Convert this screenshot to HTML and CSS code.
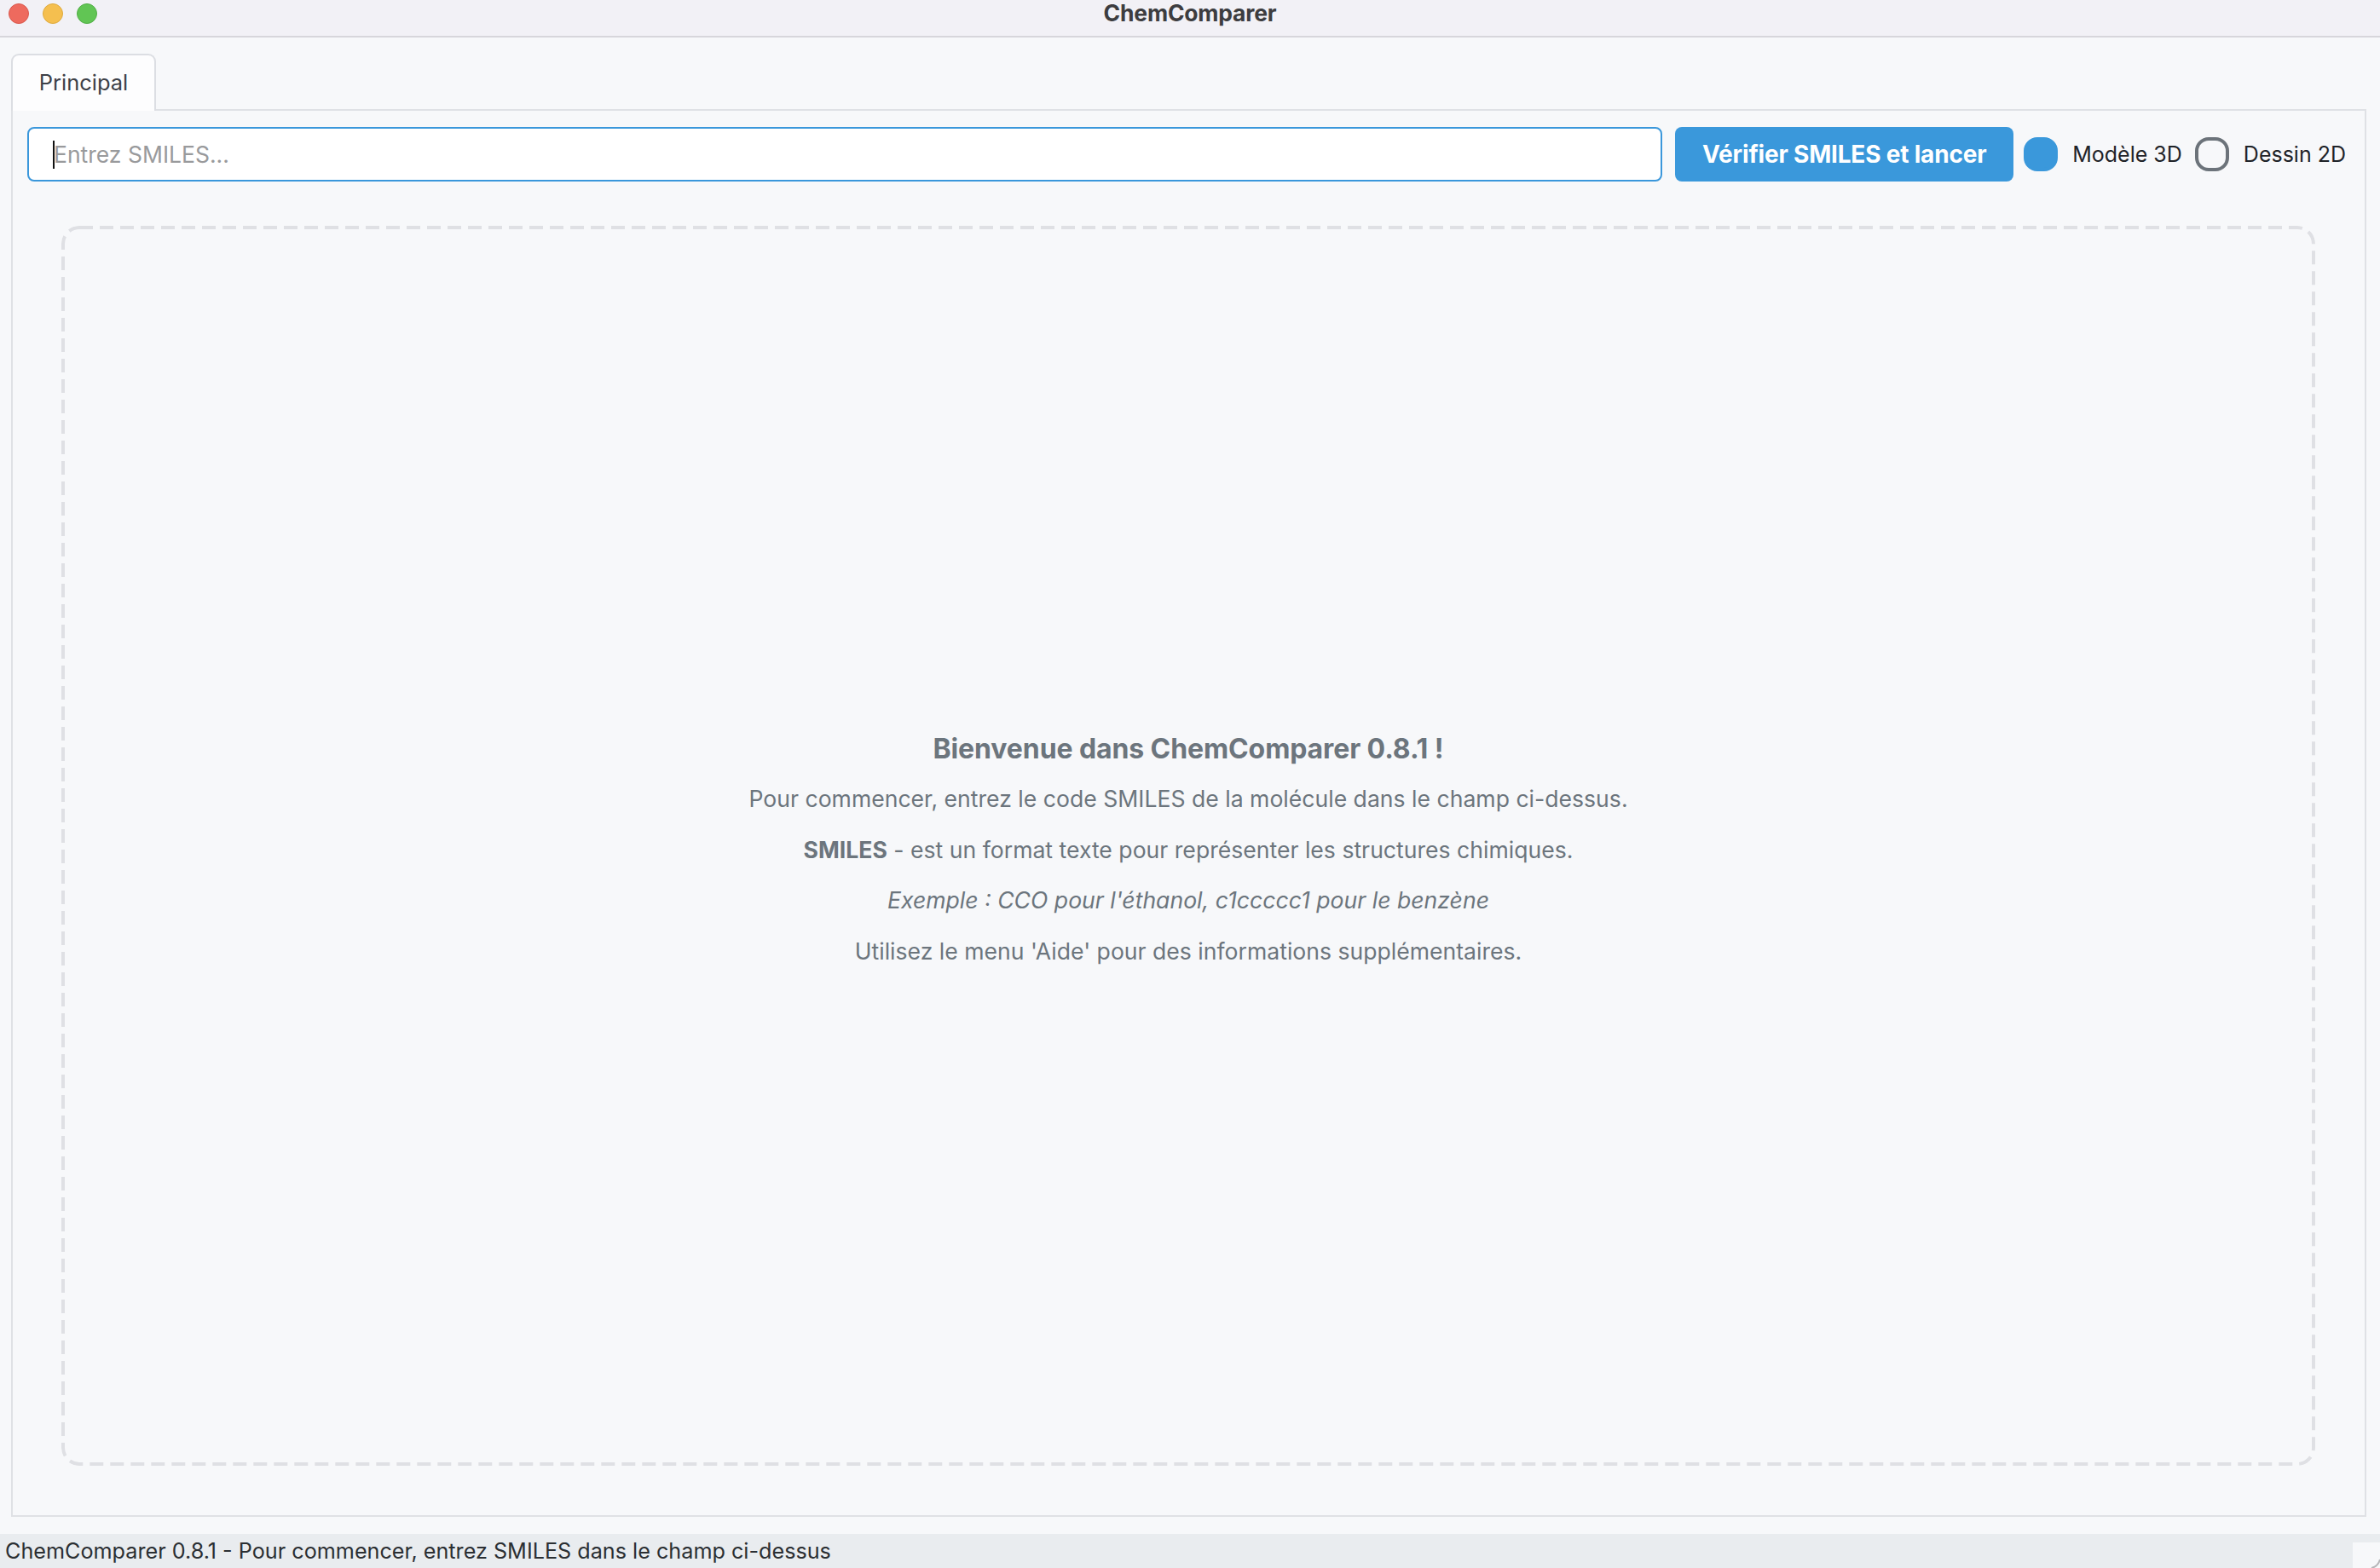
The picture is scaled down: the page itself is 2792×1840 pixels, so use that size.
FILE: index.html
```html
<!DOCTYPE html>
<html lang="fr">
<head>
<meta charset="utf-8">
<title>ChemComparer</title>
<link rel="stylesheet" href="styles.css">
</head>
<body>
<div class="window">
  <header class="titlebar">
    <div class="lights">
      <span class="light red"></span>
      <span class="light yellow"></span>
      <span class="light green"></span>
    </div>
    <div class="title">ChemComparer</div>
    <div class="spacer"></div>
  </header>

  <main class="main">
    <div class="tabs">
      <div class="tab active">Principal</div>
    </div>
    <section class="panel">
      <div class="toolbar">
        <div class="field focused">
          <span class="caret"></span>
          <span class="placeholder">Entrez SMILES...</span>
        </div>
        <button class="btn-primary" type="button">Vérifier SMILES et lancer</button>
        <label class="radio">
          <span class="radio-mark checked"></span>
          <span class="radio-label">Modèle 3D</span>
        </label>
        <label class="radio">
          <span class="radio-mark"></span>
          <span class="radio-label">Dessin 2D</span>
        </label>
      </div>
      <div class="dropzone">
        <div class="welcome">
          <div class="welcome-title">Bienvenue dans ChemComparer 0.8.1 !</div>
          <div class="welcome-line">Pour commencer, entrez le code SMILES de la molécule dans le champ ci-dessus.</div>
          <div class="welcome-line"><strong>SMILES</strong> - est un format texte pour représenter les structures chimiques.</div>
          <div class="welcome-line"><em>Exemple : CCO pour l'éthanol, c1ccccc1 pour le benzène</em></div>
          <div class="welcome-line">Utilisez le menu 'Aide' pour des informations supplémentaires.</div>
        </div>
      </div>
    </section>
  </main>

  <footer class="statusbar">
    <span class="status-text">ChemComparer 0.8.1 - Pour commencer, entrez SMILES dans le champ ci-dessus</span>
    <span class="grip">
      <svg width="32" height="30" viewBox="0 0 32 30"><path d="M32 20 Q30 28 22 30" fill="none" stroke="#b5b5b8" stroke-width="2"/></svg>
    </span>
  </footer>
</div>
</body>
</html>
```

FILE: styles.css
```css
* { box-sizing: border-box; }

html, body {
  margin: 0;
  padding: 0;
}

body {
  width: 2792px;
  height: 1840px;
  overflow: hidden;
  background: #f7f8fa;
  font-family: Inter, "Noto Sans", "Liberation Sans", sans-serif;
}

.window {
  display: flex;
  flex-direction: column;
  height: 1840px;
}

/* ---------- title bar ---------- */
.titlebar {
  flex: 0 0 44px;
  display: grid;
  grid-template-columns: 1fr auto 1fr;
  align-items: center;
  background: #f2f1f6;
  border-bottom: 2px solid #d7d6db;
}

.lights {
  display: flex;
  gap: 16px;
  padding-left: 10px;
  margin-top: -10px;
}

.light {
  width: 24px;
  height: 24px;
  border-radius: 50%;
  display: block;
}
.light.red { background: #ee6a5e; border: 1px solid #d9584d; }
.light.yellow { background: #f5bf4f; border: 1px solid #deaa3e; }
.light.green { background: #61c554; border: 1px solid #50ad45; }

.title {
  font-weight: 700;
  font-size: 26.5px;
  color: #3d3d40;
  margin-top: -12px;
  letter-spacing: -0.2px;
}

/* ---------- main ---------- */
.main {
  flex: 1;
  display: flex;
  flex-direction: column;
  padding: 19px 16px 0 13px;
}

.tabs {
  display: flex;
}

.tab {
  width: 170px;
  height: 67px;
  margin-bottom: -2px;
  border: 2px solid #dcdee3;
  border-bottom: none;
  border-radius: 9px 9px 0 0;
  background: #fdfdfe;
  color: #3d4148;
  font-size: 25.5px;
  display: flex;
  align-items: center;
  justify-content: center;
  padding-bottom: 2px;
  position: relative;
  z-index: 1;
}

.panel {
  flex: 0 0 1652px;
  display: flex;
  flex-direction: column;
  border: 2px solid #dfe1e5;
  background: #f7f8fa;
  padding: 19px 22px 58px 17px;
}

.toolbar {
  display: flex;
  align-items: center;
  height: 64px;
}

.field {
  flex: 1;
  height: 64px;
  display: flex;
  align-items: center;
  background: #ffffff;
  border: 2px solid #3a97db;
  border-radius: 8px;
  padding-left: 28px;
}

.caret {
  width: 2px;
  height: 33px;
  background: #111;
  margin-right: -1px;
}

.placeholder {
  font-size: 26.5px;
  color: #999a9c;
}

.btn-primary {
  margin-left: 15px;
  height: 64px;
  width: 397px;
  border: none;
  border-radius: 8px;
  background: #3a98db;
  color: #fff;
  font-family: Inter, "Noto Sans", sans-serif;
  font-weight: 700;
  font-size: 28px;
  letter-spacing: -0.2px;
  padding: 0;
}

.radio {
  display: flex;
  align-items: center;
  margin-left: 12px;
}
.radio + .radio { margin-left: 15px; }

.radio-mark {
  width: 40px;
  height: 40px;
  border-radius: 16px;
  border: 4px solid #6c737a;
  display: block;
}
.radio-mark.checked {
  background: #3a98db;
  border-color: #3a98db;
}

.radio-label {
  margin-left: 17px;
  font-size: 25px;
  color: #1f2328;
}

/* ---------- drop zone ---------- */
.dropzone {
  flex: 1;
  margin: 52px 36px 0 40px;
  border-radius: 20px;
  background-image: url("data:image/svg+xml,%3Csvg xmlns='http://www.w3.org/2000/svg' width='2644' height='1455'%3E%3Crect x='2' y='2' width='2640' height='1451' rx='19' ry='19' fill='none' stroke='%23dfe0e4' stroke-width='4' stroke-dasharray='16 8'/%3E%3C/svg%3E");
  background-repeat: no-repeat;
  background-size: 100% 100%;
  display: flex;
  align-items: center;
  justify-content: center;
}

.welcome {
  text-align: center;
  color: #6c757d;
  line-height: 59.5px;
  margin-top: 10px;
}

.welcome-title {
  font-size: 32px;
  font-weight: 700;
  letter-spacing: -0.1px;
}

.welcome-line {
  font-size: 26.6px;
}

.welcome-line strong {
  font-weight: 700;
}

/* ---------- status bar ---------- */
.statusbar {
  margin-top: 20px;
  flex: 0 0 40px;
  background: #e9ecef;
  display: flex;
  align-items: flex-end;
  justify-content: space-between;
}

.status-text {
  align-self: center;
  padding-left: 6px;
  font-size: 25.2px;
  color: #2b2f33;
}

.grip {
  width: 32px;
  height: 30px;
  background: #f7f8fa;
  display: block;
}
.grip svg { display: block; }
```
